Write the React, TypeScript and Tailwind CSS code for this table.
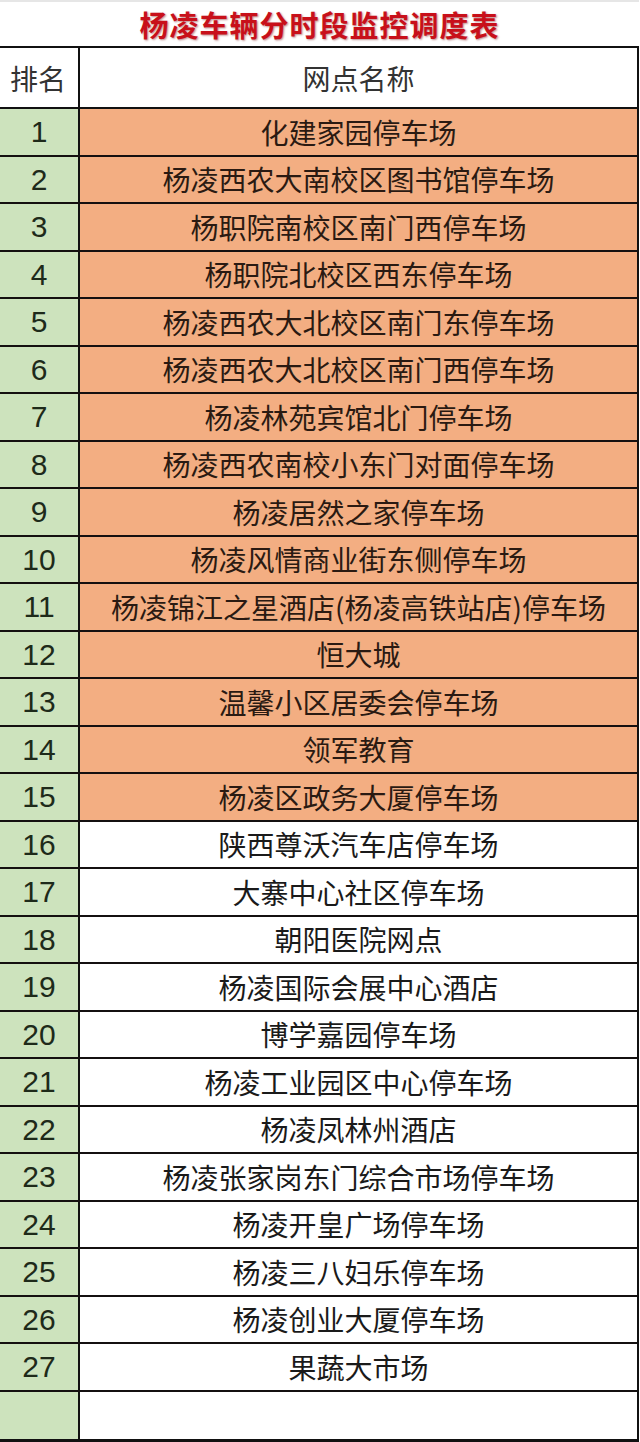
const rows = [
  "化建家园停车场",
  "杨凌西农大南校区图书馆停车场",
  "杨职院南校区南门西停车场",
  "杨职院北校区西东停车场",
  "杨凌西农大北校区南门东停车场",
  "杨凌西农大北校区南门西停车场",
  "杨凌林苑宾馆北门停车场",
  "杨凌西农南校小东门对面停车场",
  "杨凌居然之家停车场",
  "杨凌风情商业街东侧停车场",
  "杨凌锦江之星酒店(杨凌高铁站店)停车场",
  "恒大城",
  "温馨小区居委会停车场",
  "领军教育",
  "杨凌区政务大厦停车场",
  "陕西尊沃汽车店停车场",
  "大寨中心社区停车场",
  "朝阳医院网点",
  "杨凌国际会展中心酒店",
  "博学嘉园停车场",
  "杨凌工业园区中心停车场",
  "杨凌凤林州酒店",
  "杨凌张家岗东门综合市场停车场",
  "杨凌开皇广场停车场",
  "杨凌三八妇乐停车场",
  "杨凌创业大厦停车场",
  "果蔬大市场",
];

const cjk = "font-['Noto_Sans_CJK_SC',sans-serif]";

export default function App() {
  return (
    <div className="w-[640px] h-[1442px] bg-white overflow-hidden">
      <div className="w-[639px]">
        {/* title */}
        <div className="h-[48px] flex items-center justify-center border-t-2 border-t-[#e6e6e6] border-b-2 border-b-[#111]">
          <span
            className={`${cjk} text-[29px] font-bold leading-none text-[#c8101a] tracking-[1px] [text-shadow:1px_1px_2px_rgba(110,0,0,0.45)]`}
          >
            杨凌车辆分时段监控调度表
          </span>
        </div>

        <div className="border-r-2 border-r-[#111]">
          {/* header */}
          <div className="h-[61px] flex border-b-2 border-b-[#111]">
            <div className={`w-[80px] flex items-center justify-center border-r-2 border-r-[#111] ${cjk} text-[28px] text-[#333] pr-[2px]`}>
              排名
            </div>
            <div className={`flex-1 flex items-center justify-center ${cjk} text-[28px] text-[#333]`}>
              网点名称
            </div>
          </div>

          {rows.map((name, i) => (
            <div key={i} className="h-[47.5px] flex border-b-2 border-b-[#141010]">
              <div className="w-[80px] flex items-center justify-center bg-[#cde3bd] border-r-2 border-r-[#111] font-['Liberation_Sans',sans-serif] text-[30px] text-[#1e2a1a]">
                {i + 1}
              </div>
              <div
                className={`flex-1 flex items-center justify-center ${cjk} text-[28px] whitespace-nowrap ${
                  i < 15 ? "bg-[#f3ae82] text-[#2a1a12]" : "bg-white text-[#1a1a1a]"
                }`}
              >
                {name}
              </div>
            </div>
          ))}

          {/* blank row */}
          <div className="h-[50.5px] flex border-b-[3px] border-b-[#111]">
            <div className="w-[80px] bg-[#cde3bd] border-r-2 border-r-[#111]" />
            <div className="flex-1 bg-white" />
          </div>
        </div>
      </div>
    </div>
  );
}
